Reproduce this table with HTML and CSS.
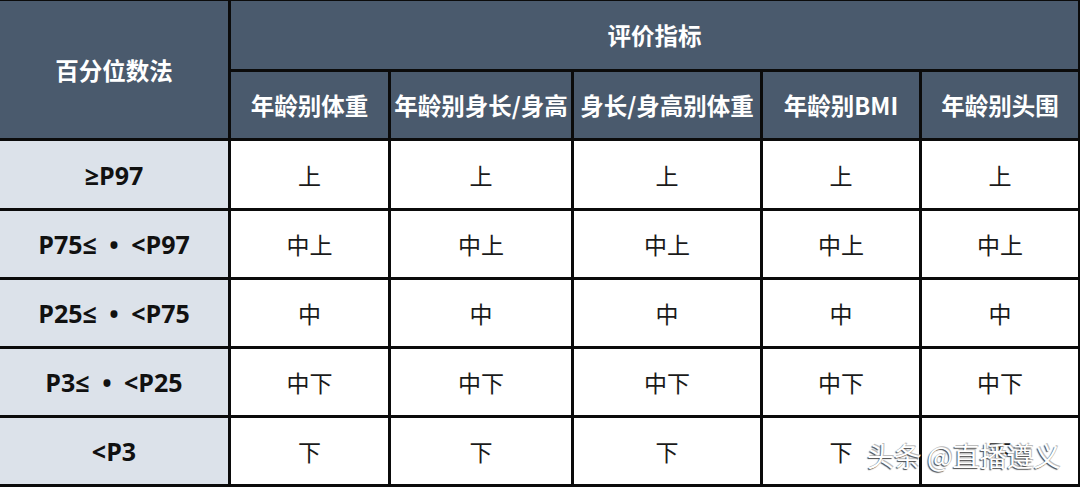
FILE: index.html
```html
<!DOCTYPE html>
<html lang="zh-CN">
<head>
<meta charset="utf-8">
<title>百分位数法</title>
<link rel="stylesheet" href="styles.css">
</head>
<body>
<div class="page">
  <div class="table">
    <div class="cell head corner">百分位数法</div>
    <div class="cell head group">评价指标</div>
    <div class="cell head">年龄别体重</div>
    <div class="cell head">年龄别身长/身高</div>
    <div class="cell head">身长/身高别体重</div>
    <div class="cell head">年龄别BMI</div>
    <div class="cell head">年龄别头围</div>

    <div class="cell label">≥P97</div>
    <div class="cell">上</div><div class="cell">上</div><div class="cell">上</div><div class="cell">上</div><div class="cell">上</div>

    <div class="cell label">P75≤&ensp;•&ensp;&lt;P97</div>
    <div class="cell">中上</div><div class="cell">中上</div><div class="cell">中上</div><div class="cell">中上</div><div class="cell">中上</div>

    <div class="cell label">P25≤&ensp;•&ensp;&lt;P75</div>
    <div class="cell">中</div><div class="cell">中</div><div class="cell">中</div><div class="cell">中</div><div class="cell">中</div>

    <div class="cell label">P3≤&ensp;•&ensp;&lt;P25</div>
    <div class="cell">中下</div><div class="cell">中下</div><div class="cell">中下</div><div class="cell">中下</div><div class="cell">中下</div>

    <div class="cell label">&lt;P3</div>
    <div class="cell">下</div><div class="cell">下</div><div class="cell">下</div><div class="cell">下</div><div class="cell">下</div>
  </div>
  <div class="watermark">头条 @直播遵义</div>
</div>
</body>
</html>
```

FILE: styles.css
```css
html, body {
  margin: 0;
  padding: 0;
  background: #ffffff;
}
body {
  font-family: "Noto Sans CJK SC", "Noto Sans", sans-serif;
}
.page {
  position: relative;
  width: 1080px;
  height: 487px;
  overflow: hidden;
}
.table {
  display: grid;
  grid-template-columns: 228px 157px 180px 186px 156px 156px;
  grid-template-rows: 68px 66px 67px 66px 66px 66px 66px;
  gap: 3px;
  padding: 1px 2px 3px 0;
  background: #0b0b0b;
  width: 1080px;
  height: 487px;
  box-sizing: border-box;
}
.cell {
  display: flex;
  align-items: center;
  justify-content: center;
  background: #ffffff;
  color: #1a1a1a;
  font-size: 23px;
  white-space: nowrap;
}
.head {
  background: #4a5a6d;
  color: #ffffff;
  font-weight: 700;
  font-size: 23.5px;
}
.corner {
  grid-row: 1 / span 2;
  grid-column: 1;
}
.group {
  grid-column: 2 / span 5;
}
.label {
  background: #dce2ea;
  font-family: "Open Sans", "DejaVu Sans", "Noto Sans CJK SC", sans-serif;
  font-weight: 700;
  font-size: 25px;
  color: #111111;
  white-space: pre;
}
.watermark {
  position: absolute;
  left: 867px;
  top: 436px;
  font-size: 27px;
  color: #ffffff;
  text-shadow: -1px 1px 1px #4a4a4a, 1px -1px 0 #bdbdbd;
  white-space: nowrap;
}
```
